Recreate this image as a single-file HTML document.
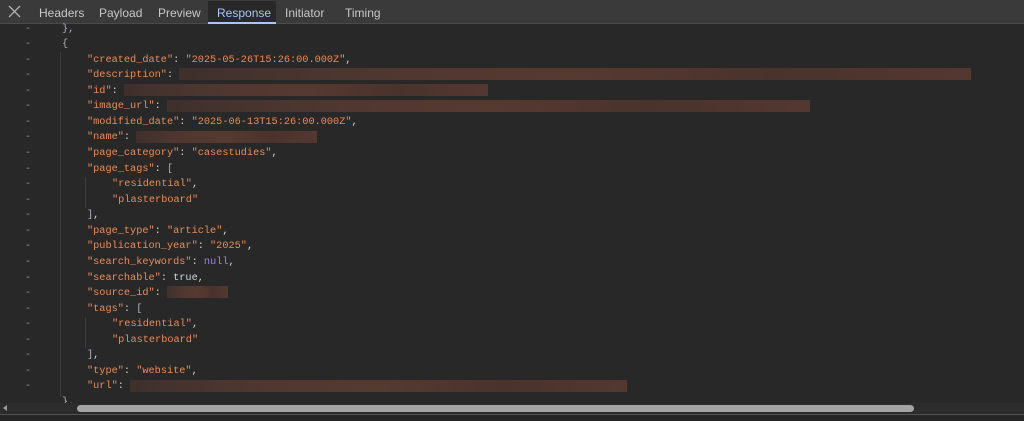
<!DOCTYPE html>
<html><head><meta charset="utf-8"><style>
*{margin:0;padding:0;box-sizing:border-box}
body{width:1024px;height:421px;background:#282828;overflow:hidden;position:relative;font-family:"Liberation Sans",sans-serif}
.tabs{position:absolute;left:0;top:0;width:1024px;height:24px;background:#3a3a3a;border-bottom:1px solid #4a4a4a}
.tab{position:absolute;top:6px;font-size:12px;color:#c8c8c8}
.act{position:absolute;left:208px;top:1px;width:68px;height:23px;background:#282828}
.act span{position:absolute;left:9px;top:5px;font-size:12px;color:#a8c7fa}
.act i{position:absolute;left:0;bottom:0;width:68px;height:2px;background:#a8c7fa}
.ln{position:absolute;left:0;height:15px;font-family:"Liberation Mono",monospace;font-size:10.25px;line-height:15px;white-space:pre;color:#d4d4d4}
.d{position:absolute;left:25px;color:#7b9ab8}
.c{position:absolute}
.k{color:#ed8b55}
.s{color:#ed8b55}
.b{color:#a8b4c4}
.n{color:#a87ff0}
.t{color:#c9dbe3}
.blur{display:inline-block;height:12px;vertical-align:middle;background:linear-gradient(90deg,#3f302c,#4f3731,#553a30,#4a332d,#523830);}
.g{position:absolute;width:1px;background:#3c3c3c}
</style></head><body>
<div class="tabs">
<svg style="position:absolute;left:8px;top:5px" width="13" height="13" viewBox="0 0 13 13"><path d="M1 1L12 12M12 1L1 12" stroke="#b0b0b0" stroke-width="1.3"/></svg>
<span class="tab" style="left:39px">Headers</span>
<span class="tab" style="left:99px">Payload</span>
<span class="tab" style="left:158px">Preview</span>
<div class="act"><span>Response</span><i></i></div>
<span class="tab" style="left:285px">Initiator</span>
<span class="tab" style="left:345px">Timing</span>
</div>
<div class="g" style="left:60px;top:52px;height:345px"></div>
<div class="g" style="left:85px;top:177px;height:31px"></div>
<div class="g" style="left:85px;top:317px;height:31px"></div>
<div id="c"></div>
<div style="position:absolute;left:0;top:403px;width:1024px;height:10px;background:#2c2c2c"></div>
<div style="position:absolute;left:3px;top:405px;width:0;height:0;border-top:3px solid transparent;border-bottom:3px solid transparent;border-right:4px solid #9a9a9a"></div>
<div style="position:absolute;left:77px;top:405px;width:837px;height:7px;border-radius:4px;background:#a4a4a4"></div>
<div style="position:absolute;left:0;top:414px;width:1024px;height:1px;background:#555"></div>
<div style="position:absolute;left:0;top:415px;width:1024px;height:6px;background:#252525"></div>
<script>
var L=[
[62,'<span class="b">},</span>'],
[62,'<span class="b">{</span>'],
[87,'<span class="k">"created_date"</span>: <span class="s">"2025-05-26T15:26:00.000Z"</span>,'],
[87,'<span class="k">"description"</span>: <span class="blur" style="width:792px"></span>'],
[87,'<span class="k">"id"</span>: <span class="blur" style="width:364px"></span>'],
[87,'<span class="k">"image_url"</span>: <span class="blur" style="width:643px"></span>'],
[87,'<span class="k">"modified_date"</span>: <span class="s">"2025-06-13T15:26:00.000Z"</span>,'],
[87,'<span class="k">"name"</span>: <span class="blur" style="width:181px"></span>'],
[87,'<span class="k">"page_category"</span>: <span class="s">"casestudies"</span>,'],
[87,'<span class="k">"page_tags"</span>: <span class="b">[</span>'],
[112,'<span class="s">"residential"</span>,'],
[112,'<span class="s">"plasterboard"</span>'],
[87,'<span class="b">]</span>,'],
[87,'<span class="k">"page_type"</span>: <span class="s">"article"</span>,'],
[87,'<span class="k">"publication_year"</span>: <span class="s">"2025"</span>,'],
[87,'<span class="k">"search_keywords"</span>: <span class="n">null</span>,'],
[87,'<span class="k">"searchable"</span>: <span class="t">true</span>,'],
[87,'<span class="k">"source_id"</span>: <span class="blur" style="width:61px"></span>'],
[87,'<span class="k">"tags"</span>: <span class="b">[</span>'],
[112,'<span class="s">"residential"</span>,'],
[112,'<span class="s">"plasterboard"</span>'],
[87,'<span class="b">]</span>,'],
[87,'<span class="k">"type"</span>: <span class="s">"website"</span>,'],
[87,'<span class="k">"url"</span>: <span class="blur" style="width:497px"></span>'],
[62,'<span class="b">},</span>']
];
var h='';
for(var i=0;i<L.length;i++){var y=29+i*15.56-7.5;
h+='<div class="ln" style="top:'+y.toFixed(1)+'px;width:1024px">'+(i<24?'<span class="d">-</span>':'')+'<span class="c" style="left:'+L[i][0]+'px">'+L[i][1]+'</span></div>';}
document.getElementById('c').innerHTML=h;
</script>
</body></html>
